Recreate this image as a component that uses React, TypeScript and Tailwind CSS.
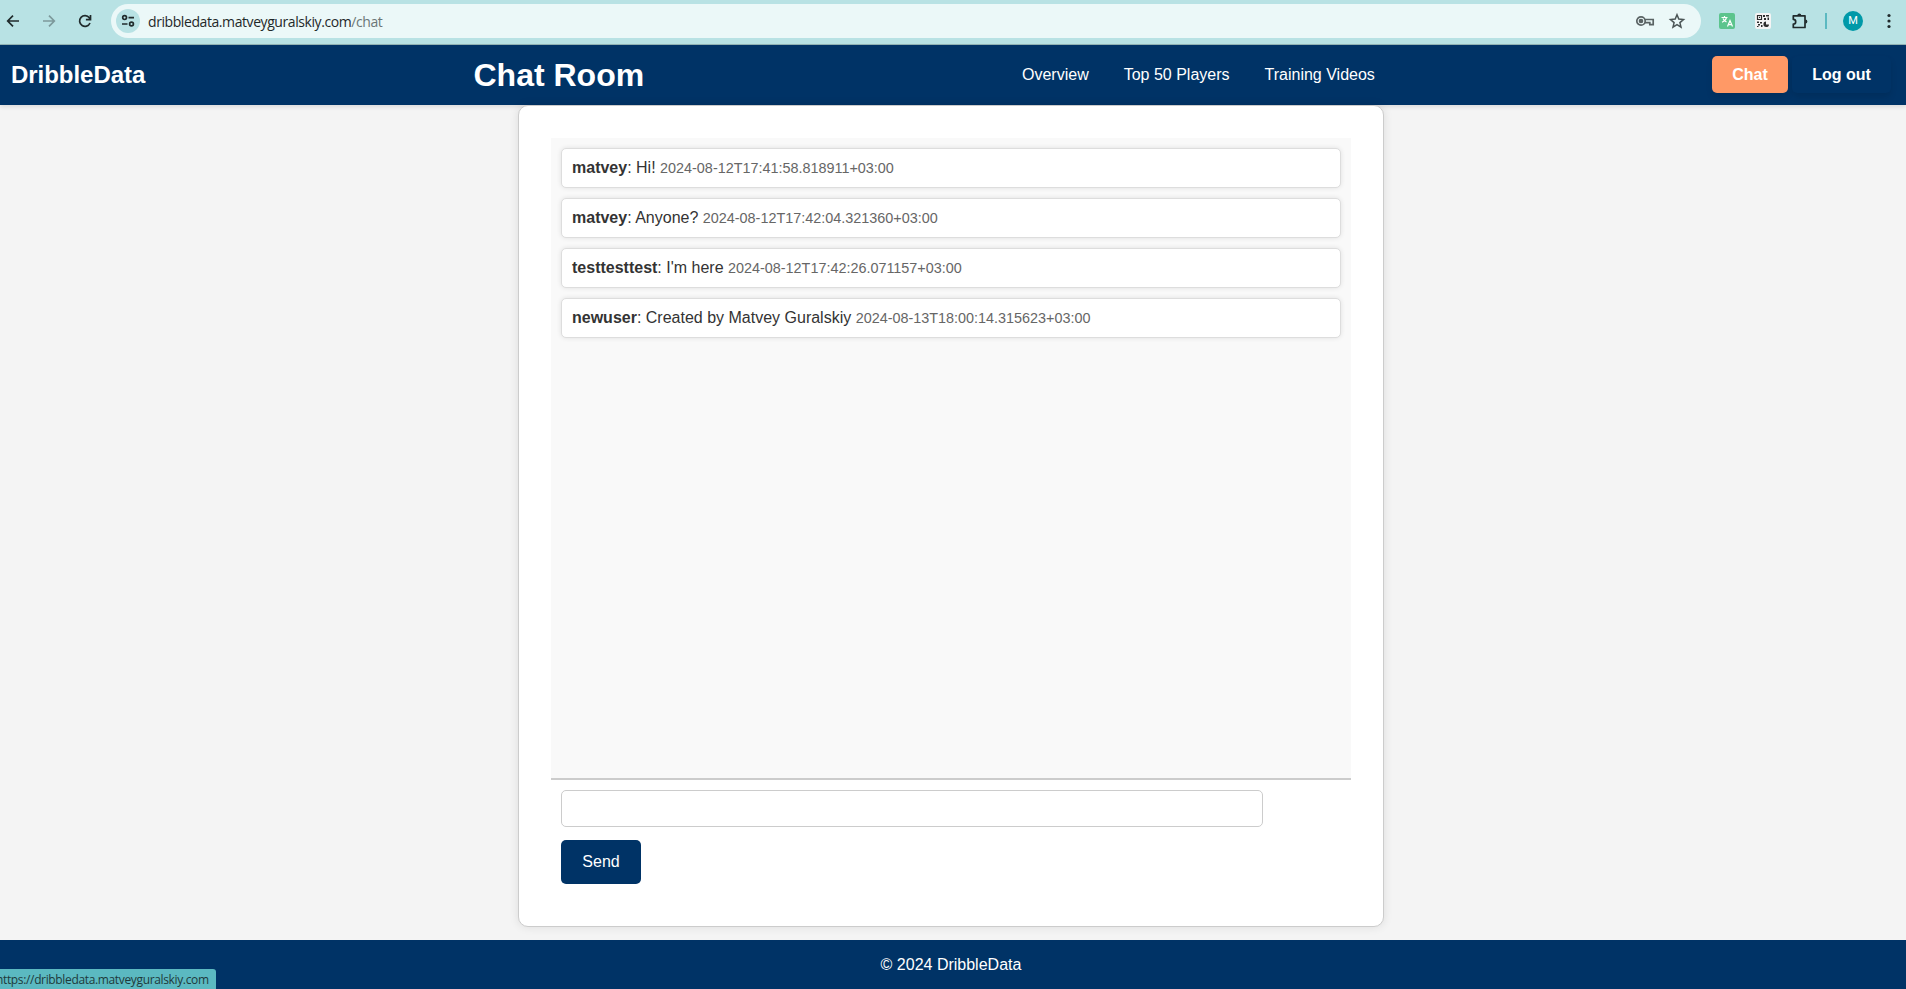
import type { ReactNode } from "react";

type Message = { user: string; text: string; time: string };

const messages: Message[] = [
  { user: "matvey", text: "Hi!", time: "2024-08-12T17:41:58.818911+03:00" },
  { user: "matvey", text: "Anyone?", time: "2024-08-12T17:42:04.321360+03:00" },
  { user: "testtesttest", text: "I'm here", time: "2024-08-12T17:42:26.071157+03:00" },
  { user: "newuser", text: "Created by Matvey Guralskiy", time: "2024-08-13T18:00:14.315623+03:00" },
];

function Icon({ children, className }: { children: ReactNode; className: string }) {
  return (
    <svg viewBox="0 0 20 20" width="20" height="20" fill="none" stroke="currentColor" strokeWidth="1.7" className={`shrink-0 ${className}`}>
      {children}
    </svg>
  );
}

function BrowserBar() {
  return (
    <div className="flex h-[45px] items-start border-b border-[#93b5b6] bg-[#b8e2e4] pt-1">
      <div className="flex h-[34px] w-[111px] shrink-0 items-center pl-[3px] text-[#202b2c]">
        <Icon className="">
          <path d="M16 10H5M10 4.700 4.700 10l5.300 5.300" />
        </Icon>
        <Icon className="ml-[16px] text-[#7d999b]">
          <path d="M4 10h11M10 4.700l5.300 5.300-5.300 5.300" />
        </Icon>
        <Icon className="ml-[16px]">
          <path d="M15 12a5.400 5.400 0 1 1-.7-5.300L15.200 8M15.500 4v4.600h-4.600" />
        </Icon>
      </div>
      <div className="flex h-[34px] w-[1590px] shrink-0 items-center rounded-full bg-[#ebf8f8] pl-[5px] pr-[14px]">
        <span className="flex size-6 items-center justify-center rounded-full bg-[#b8e2e4] text-[#202b2c]">
          <Icon className="">
            <circle cx="6.600" cy="6.600" r="1.900" />
            <circle cx="13.500" cy="13" r="1.900" />
            <path d="M10.500 6.600H16M4 13h5.500" />
          </Icon>
        </span>
        <span className="ml-2 whitespace-nowrap pt-px font-['Open_Sans',sans-serif] text-[14px] leading-5 tracking-[-0.42px] text-[#1f2829]">
          dribbledata.matveyguralskiy.com<span className="text-[#6b7677]">/chat</span>
        </span>
        <Icon className="ml-auto text-[#5a6364]">
          <circle cx="6" cy="10" r="4.200" />
          <circle cx="6" cy="10" r="1.500" fill="currentColor" />
          <path d="M10 8.500h8.200v5.200h-3.400v-2H10" />
        </Icon>
        <Icon className="ml-[12px] text-[#4b5556]">
          <path strokeWidth="1.500" d="m10 3.800 1.800 4.300 4.700.4-3.600 3.100 1.100 4.600-4-2.500-4 2.500 1.100-4.600-3.600-3.100 4.700-.4z" />
        </Icon>
      </div>
      <div className="flex h-[34px] items-center text-[#202b2c]">
        <svg viewBox="0 0 16 16" width="16" height="16" className="ml-[18px] shrink-0">
          <rect width="16" height="16" rx="2" fill="#5cc48d" />
          <path d="M2.500 4.500h6M5.500 3v1.500M7.500 4.500C7 7 5 8.500 3 9.300M4 5.500c.6 1.500 2 2.700 3.500 3.500M8.500 13.500l2.500-6 2.500 6M9.400 11.700h3.200" fill="none" stroke="#fff" strokeWidth="1.200" />
        </svg>
        <svg viewBox="0 0 16 16" width="16" height="16" className="ml-[20px] shrink-0">
          <rect width="16" height="16" rx="2" fill="#f4f4f4" />
          <path d="M2.500 2.500h4v4h-4zM4 4.300h1" fill="none" stroke="#2d2d2d" strokeWidth="1.200" />
          <path d="M8 2h2v2H8zM11 2h3v1.500h-3zM9 5h2v2H9zM12.500 4.500H14V7h-1.500zM2 8.500h2V10H2zM5 9h2v1.500H5zM3 11h2v1.500H3zM2 13h1.500v1H2zM6 12h1.500v2H6z" fill="#2d2d2d" />
          <path d="M11 8.500a2.800 2.800 0 1 0 3 3h-3z" fill="#2d2d2d" />
        </svg>
        <Icon className="ml-[19px]">
          <path d="M3.300 4.800h11.700v11.700H3.300v-3.400c3.200 0 3.200-4.800 0-4.800z" strokeLinejoin="round" />
          <path d="M7.300 4.500a2 2 0 0 1 4 0zM15.300 8.500a2.100 2.100 0 0 1 0 4.200z" fill="currentColor" stroke="none" />
        </Icon>
        <span className="ml-[15px] h-4 w-[2px] bg-[#5bb9c1]" />
        <span className="ml-[16px] flex size-5 items-center justify-center rounded-full bg-[#0099a8] font-[Roboto,sans-serif] text-[11px] text-white">M</span>
        <svg viewBox="0 0 4 16" width="4" height="16" className="ml-[24px]" fill="currentColor">
          <circle cx="2" cy="2.500" r="1.600" />
          <circle cx="2" cy="8" r="1.600" />
          <circle cx="2" cy="13.500" r="1.600" />
        </svg>
      </div>
    </div>
  );
}

function Header() {
  return (
    <header className="relative flex h-[60px] items-center bg-[#003366] text-white shadow-[0_2px_4px_rgba(0,0,0,0.1)]">
      <div className="w-[473.500px] pl-[11px] text-[24px] font-bold leading-7 tracking-[-0.04px]">DribbleData</div>
      <h1 className="w-[548.500px] text-[32px] font-bold leading-9">Chat Room</h1>
      <nav className="flex gap-[35px] whitespace-nowrap">
        <a>Overview</a>
        <a>Top 50 Players</a>
        <a>Training Videos</a>
      </nav>
      <div className="mb-px ml-auto mr-[15px] flex gap-1 font-bold">
        <a className="flex h-[37px] w-[76px] items-center justify-center rounded-[5px] bg-[#ff9966] shadow-[0_4px_6px_rgba(0,0,0,0.1)]">Chat</a>
        <a className="flex h-[37px] w-[99px] items-center justify-center rounded-[5px] bg-[#003366] shadow-[0_4px_6px_rgba(0,0,0,0.1)]">Log out</a>
      </div>
    </header>
  );
}

export default function App() {
  return (
    <div className="relative flex h-[989px] w-[1906px] flex-col overflow-hidden bg-[#f4f4f4] font-['Liberation_Sans',Arial,sans-serif] text-[16px] leading-[18px] text-[#333]">
      <BrowserBar />
      <Header />
      <main className="relative ml-[518px] h-[822px] w-[866px] rounded-[10px] border border-[#ccc] bg-white p-8 shadow-[0_0_10px_rgba(0,0,0,0.1)]">
        <div className="flex h-[642px] flex-col gap-[10px] border-b-2 border-[#ccc] bg-[#f9f9f9] p-[10px]">
          {messages.map((m) => (
            <div key={m.time} className="h-10 rounded-[5px] border border-[#ddd] bg-white p-[10px] shadow-[0_0_5px_rgba(0,0,0,0.1)]">
              <strong>{m.user}</strong>: {m.text} <span className="text-[14.4px] text-[#666]">{m.time}</span>
            </div>
          ))}
        </div>
        <form className="flex flex-col items-start gap-[13px] p-[10px]">
          <input className="h-[37px] w-[702px] rounded-[5px] border border-[#ccc] px-[10px]" />
          <button type="button" className="h-11 w-20 rounded-[5px] bg-[#003366] text-white">Send</button>
        </form>
      </main>
      <footer className="mt-auto flex h-[49px] items-center justify-center bg-[#003366] pr-1 text-white">© 2024 DribbleData</footer>
      <div className="absolute bottom-0 left-0 flex h-5 w-[216px] items-center overflow-hidden whitespace-nowrap rounded-tr-[3px] bg-[#5bb9c1] pt-[2px] font-['Open_Sans',sans-serif] text-[12px] tracking-[-0.35px] text-[#20393b]">
        <span className="-ml-1">https://dribbledata.matveyguralskiy.com</span>
      </div>
    </div>
  );
}
